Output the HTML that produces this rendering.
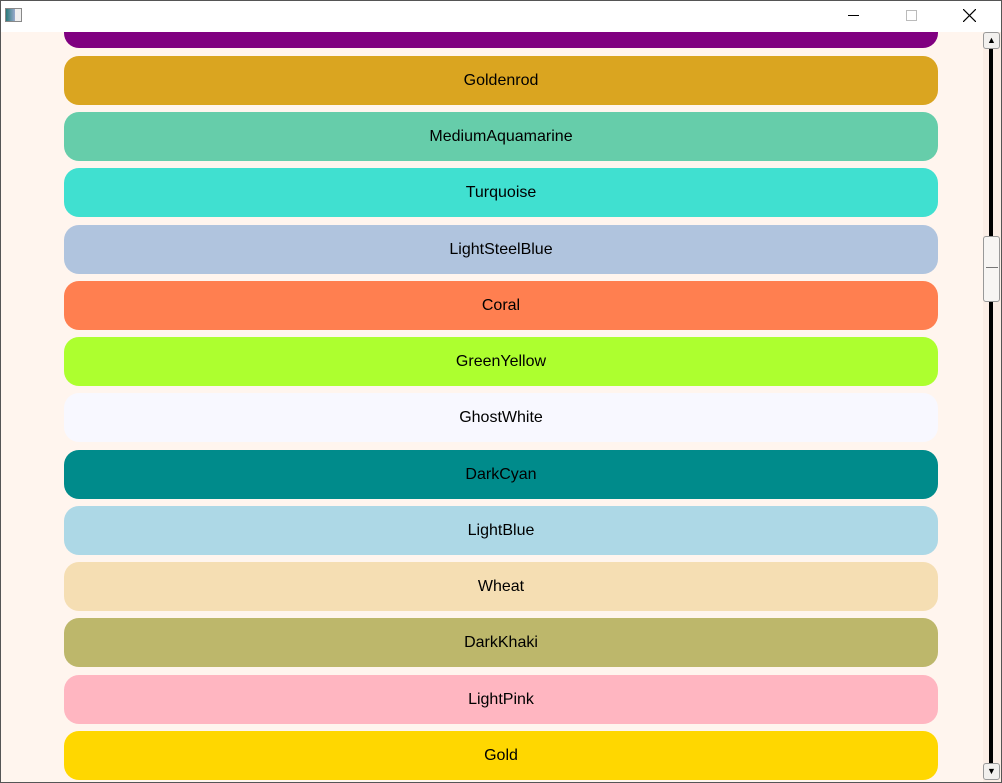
<!DOCTYPE html>
<html><head><style>
*{margin:0;padding:0;box-sizing:border-box}
body{width:1002px;height:783px;overflow:hidden;background:#fff5ee;font-family:"Liberation Sans",sans-serif;position:relative}
.tb{position:absolute;left:0;top:0;width:1002px;height:32px;background:#fff;z-index:3}
.win{position:absolute;inset:0;border:1px solid #555;z-index:5;pointer-events:none}
.b{position:absolute;left:64px;width:874px;height:49px;border-radius:15px;display:flex;align-items:center;justify-content:center;font-size:16px;color:#000}
.sb{position:absolute;left:983px;top:32px;width:18px;height:750px;background:#fbeee6}
.line{position:absolute;left:6px;top:10px;width:4px;height:735px;background:#000}
.btn{position:absolute;left:0;width:17px;background:#f2f0ee;border:1px solid #999;border-radius:3px}
</style></head><body>
<div class="tb">
<div style="position:absolute;left:5px;top:8px;width:17px;height:14px;border:1px solid #888;background:linear-gradient(90deg,#2a7a7a,#9ac 60%,#eee 60%)"></div>
<div style="position:absolute;left:848px;top:15px;width:11px;height:1px;background:#000"></div>
<div style="position:absolute;left:906px;top:10px;width:11px;height:11px;border:1px solid #bbb"></div>
<svg style="position:absolute;left:963px;top:9px" width="13" height="13"><path d="M0 0L13 13M13 0L0 13" stroke="#000" stroke-width="1.2"/></svg>
</div>
<div class="b" style="top:0;background:#800080;height:48px"></div>
<div class="b" style="top:56px;background:#daa520">Goldenrod</div>
<div class="b" style="top:112px;background:#66cdaa">MediumAquamarine</div>
<div class="b" style="top:168px;background:#40e0d0">Turquoise</div>
<div class="b" style="top:225px;background:#b0c4de">LightSteelBlue</div>
<div class="b" style="top:281px;background:#ff7f50">Coral</div>
<div class="b" style="top:337px;background:#adff2f">GreenYellow</div>
<div class="b" style="top:393px;background:#f8f8ff">GhostWhite</div>
<div class="b" style="top:450px;background:#008b8b">DarkCyan</div>
<div class="b" style="top:506px;background:#add8e6">LightBlue</div>
<div class="b" style="top:562px;background:#f5deb3">Wheat</div>
<div class="b" style="top:618px;background:#bdb76b">DarkKhaki</div>
<div class="b" style="top:675px;background:#ffb6c1">LightPink</div>
<div class="b" style="top:731px;background:#ffd700">Gold</div>
<div class="sb"><div class="line"></div>
<div class="btn" style="top:0;height:17px;font-size:9px;text-align:center;line-height:15px">&#9650;</div>
<div class="btn" style="top:204px;height:66px;background:#f7f5f3"><div style="position:absolute;left:2px;top:30px;width:12px;height:1px;background:#777"></div></div>
<div class="btn" style="top:731px;height:17px;font-size:9px;text-align:center;line-height:15px">&#9660;</div>
</div>
<div class="win"></div>
</body></html>
